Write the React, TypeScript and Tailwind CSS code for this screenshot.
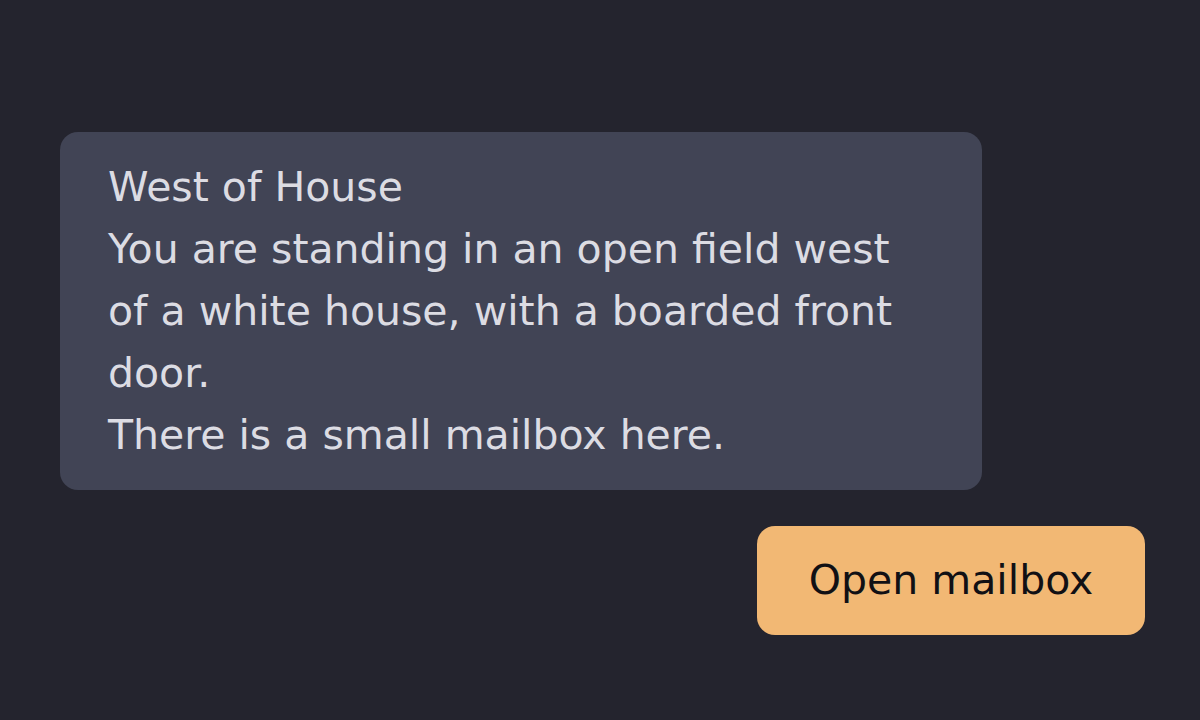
export default function App() {
  return (
    <div className="min-h-[720px] w-full bg-[#24242e] px-[60px] pr-[55px] pt-[132px] font-['DejaVu_Sans',sans-serif]">
      <div className="flex flex-col gap-9">
        <div className="w-[922px] rounded-[18px] bg-[#414455] px-12 py-6 text-[41px] leading-[62px] text-[#dcdce3]">
          <p>West of House</p>
          <p>You are standing in an open field west of a white house, with a boarded front door.</p>
          <p>There is a small mailbox here.</p>
        </div>
        <div className="flex justify-end">
          <button className="h-[109px] w-[388px] rounded-[18px] bg-[#f2b874] text-[41px] text-[#111014]">
            Open mailbox
          </button>
        </div>
      </div>
    </div>
  )
}
